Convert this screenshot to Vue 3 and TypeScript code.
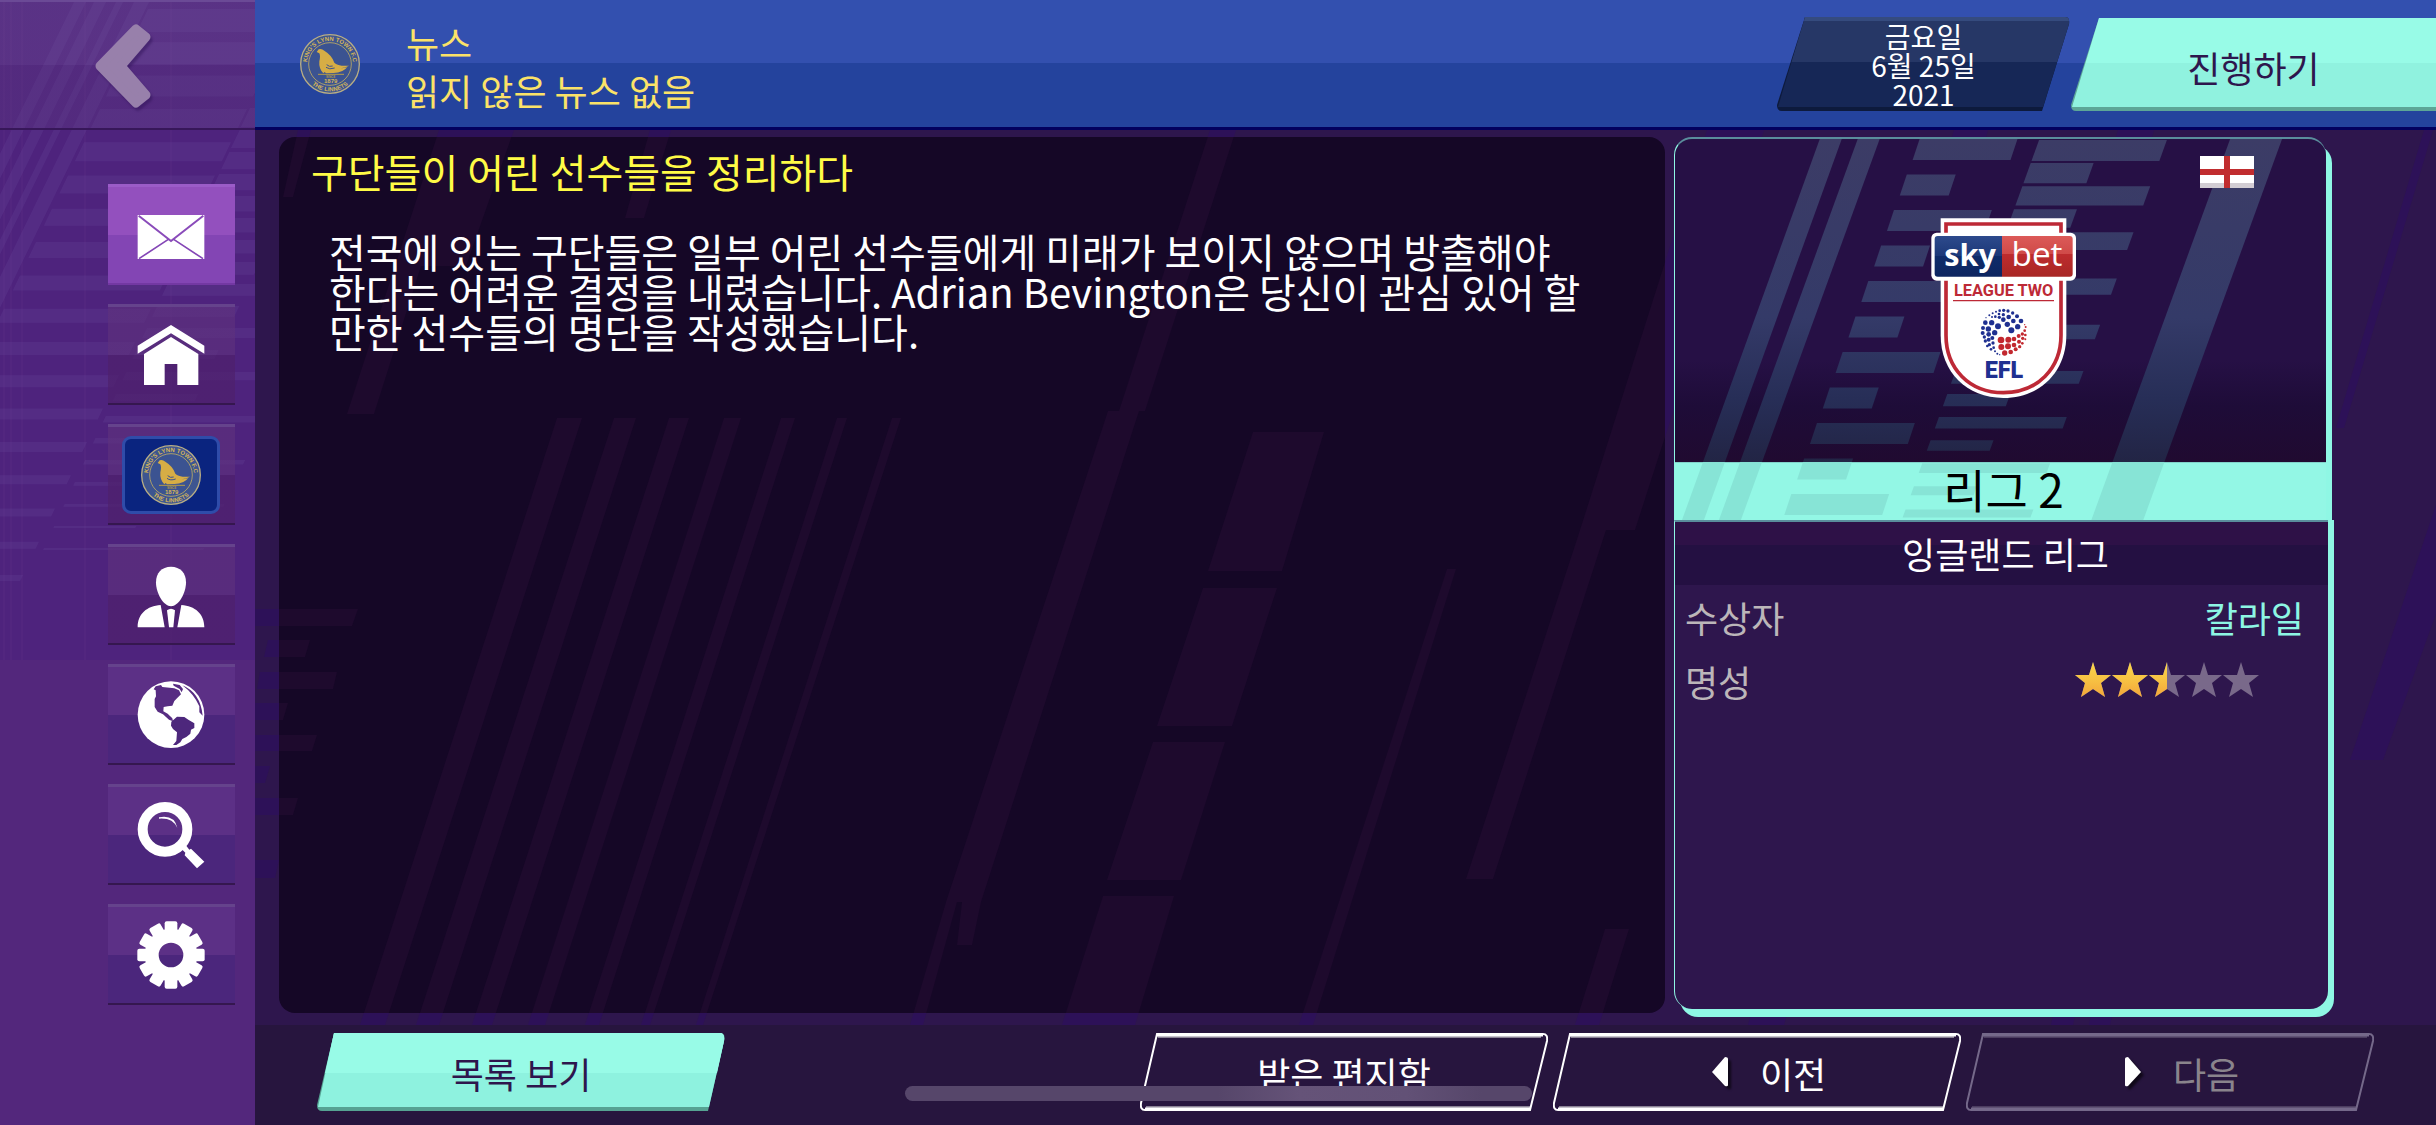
<script setup lang="ts">
import { computed, ref } from 'vue'

interface Tab {
  id: string
  label: string
}

const tabs: Tab[] = [
  { id: 'news', label: '뉴스' },
  { id: 'home', label: '홈' },
  { id: 'club', label: '구단' },
  { id: 'manager', label: '감독' },
  { id: 'world', label: '세계' },
  { id: 'search', label: '검색' },
  { id: 'settings', label: '설정' },
]
const active = ref('news')

const reputation = 2.5
const starFill = computed(() =>
  [0, 1, 2, 3, 4].map((i) => Math.max(0, Math.min(1, reputation - i))),
)
const starPath = 'M18 0 L22 13 L36 13 L26 21 L30 35 L18 27 L6 35 L10 21 L0 13 L14 13 Z'

/* A slanted bar: top-left, top width, top y, bottom-left, bottom width, bottom y */
type Bar = [number, number, number, number, number, number]
const toPoints = ([x1, w1, y1, x2, w2, y2]: Bar) =>
  `${x1},${y1} ${x1 + w1},${y1} ${x2 + w2},${y2} ${x2},${y2}`

const backdrop = ([
  [557, 25, 418, 360, 25, 1025],
  [614, 22, 418, 416, 23, 1025],
  [669, 20, 418, 472, 20, 1025],
  [724, 17, 418, 528, 17, 1025],
  [781, 14, 418, 585, 14, 1025],
  [837, 10, 418, 641, 9, 1025],
  [892, 9, 418, 696, 7, 1025],
  [1210, 26, 130, 1119, 26, 411],
  [1108, 31, 411, 946, 35, 902],
  [946, 11, 902, 910, 13, 1025],
  [962, 19, 902, 957, 15, 945],
  [1253, 71, 432, 1208, 74, 571],
  [1203, 74, 588, 1157, 75, 726],
  [1153, 72, 742, 1107, 74, 880],
  [1103, 71, 896, 1062, 73, 1025],
  [1447, 9, 569, 1299, 14, 1025],
  [1707, 57, 130, 1580, 55, 530],
  [1580, 26, 530, 1466, 27, 879],
  [1605, 24, 929, 1575, 24, 1025],
  [439, 75, 130, 395, 71, 266],
  [395, 26, 266, 347, 27, 414],
  [298, 13, 130, 283, 10, 197],
  [650, 21, 130, 625, 19, 218],
  [255, 103, 609, 255, 97, 626],
  [268, 42, 640, 264, 41, 657],
  [260, 77, 672, 257, 76, 689],
  [255, 33, 703, 255, 28, 720],
  [255, 62, 735, 255, 57, 751],
  [255, 15, 766, 255, 10, 783],
  [255, 43, 798, 255, 38, 815],
  [255, 24, 860, 255, 20, 878],
  [1954, 34, 130, 1952, 34, 137],
  [2118, 36, 130, 2116, 36, 137],
  [2424, 9, 130, 2336, 8, 428],
  [2440, 40, 493, 2350, 33, 760],
  [1752, 36, 1010, 1748, 36, 1025],
  [2054, 22, 1010, 2051, 22, 1025],
  [2092, 21, 1010, 2089, 21, 1025],
] as Bar[]).map(toPoints)

const sideBars: string[] = []
for (const [x, w] of [[75, 12], [95, 12], [117, 7], [135, 15]]) {
  sideBars.push(toPoints([x, w, 0, x - 156, w, 320]))
}
for (let i = 0; i < 18; i++) {
  const y = 9 + i * 33.3
  const h = 23 - i
  const left = Math.max(-30, 148 - i * 16)
  const right = 295 - i * 16
  sideBars.push(toPoints([left, right - left, y, left - h * 0.48, right - left, y + h]))
}
for (let i = 0; i < 21; i++) {
  const y = 108 + i * 22
  const h = Math.max(2, 19 - i * 0.9)
  const x = 250 - i * 10.3
  const w = i % 2 ? 82 : 160
  sideBars.push(toPoints([x, w, y, x - h * 0.48, w, y + h]))
}

/* Competition card pattern, drawn in a 652 x 382 space */
const heroBars: string[] = [
  toPoints([145, 22, 0, 7, 22, 382]),
  toPoints([183, 22, 0, 44, 22, 382]),
  toPoints([556, 52, 0, 417, 52, 382]),
]
for (let i = 0; i < 11; i++) {
  const y = i * 35.6
  const x = 245 - y * 0.361
  const w = i % 2 ? 49 : 98
  heroBars.push(toPoints([x, w, y, x - 7, w, y + 21]))
}
for (let i = 0; i < 17; i++) {
  const y = 1 + i * 23.15
  const h = 21 - i * 0.8
  const x = 365 - y * 0.361
  const w = i % 2 ? 63 : 128
  heroBars.push(toPoints([x, w, y, x - h * 0.361, w, y + h]))
}

const blueDots = [
  [334, 390, 9], [294, 378, 9], [322, 372, 8], [353, 379, 8], [284, 397, 8], [340, 362, 7], [363, 362, 7],
  [275, 367, 8], [256, 367, 7], [265, 386, 8], [249, 383, 6], [248, 398, 6], [266, 402, 7], [277, 413, 6],
  [253, 410, 5], [266, 418, 6], [279, 428, 5], [256, 422, 5], [268, 433, 5], [281, 442, 4], [262, 437, 4],
  [273, 447, 4], [285, 453, 3], [292, 460, 3], [299, 463, 2], [310, 358, 7], [326, 350, 7], [298, 351, 5],
  [351, 348, 6], [310, 343, 5], [338, 338, 5], [324, 332, 5], [311, 330, 5], [297, 341, 4], [286, 349, 4],
  [299, 331, 4], [288, 334, 3], [278, 339, 3], [268, 345, 3], [276, 350, 3], [258, 352, 2],
]
const redDots = [
  [303, 419, 10], [325, 418, 9], [304, 440, 9], [324, 438, 9], [314, 458, 8], [342, 416, 7], [342, 434, 7],
  [332, 455, 7], [356, 407, 6], [357, 424, 6], [347, 447, 6], [359, 439, 5], [367, 401, 5], [368, 414, 5],
  [367, 429, 4], [374, 391, 4], [376, 404, 4], [376, 417, 3], [377, 380, 3], [374, 373, 2],
]
const teeth = Array.from({ length: 12 }, (_, i) => i * 30)
</script>

<template>
  <div class="app">
    <svg class="defs" aria-hidden="true">
      <defs>
        <symbol id="crest" viewBox="0 0 180 180">
          <circle cx="90" cy="90" r="88" fill="#3d5590" stroke="#b9ae84" stroke-width="4" />
          <circle cx="90" cy="90" r="64" fill="#3b5391" stroke="#a99d6c" stroke-width="3" />
          <path id="arc-top" d="M25 113 A69 69 0 1 1 155 113" fill="none" />
          <path id="arc-low" d="M8 90 A82 82 0 0 0 172 90" fill="none" />
          <text class="crest-text" text-anchor="middle">
            <textPath href="#arc-top" startOffset="50%">KING'S LYNN TOWN F.C</textPath>
          </text>
          <text class="crest-text" text-anchor="middle">
            <textPath href="#arc-low" startOffset="50%">THE LINNETS</textPath>
          </text>
          <path
            d="M50 54 L56 46 Q64 42 73 50 Q96 64 103 86 Q112 97 147 95 Q134 101 122 103 Q142 102 145 96 Q128 118 98 117 L78 118 L74 114 L70 118 Q56 104 58 82 Q62 66 58 58 Z"
            fill="#d6ad45"
          />
          <path d="M80 92 q8 8 18 4 M78 100 q10 8 26 2" stroke="#3b5391" stroke-width="3" fill="none" />
          <path d="M54 121 H132" stroke="#b49a4a" stroke-width="3" />
          <text class="crest-since" x="92" y="131" text-anchor="middle">SINCE</text>
          <text class="crest-year" x="92" y="147" text-anchor="middle">1879</text>
        </symbol>
      </defs>
    </svg>

    <nav class="side" aria-label="주 메뉴">
      <svg class="side-bg" viewBox="0 0 255 1125" preserveAspectRatio="none" aria-hidden="true">
        <rect width="255" height="660" fill="#4e237d" />
        <polygon v-for="(p, i) in sideBars" :key="i" :points="p" fill="#6a4a9a" fill-opacity="0.26" />
        <path d="M4 0V660 M11 0V660 M22 0V660 M85 0V660 M171 0V660" stroke="#7a4a9c" stroke-opacity="0.2" />
      </svg>
      <button class="back" type="button" aria-label="뒤로">
        <svg width="56" height="84" viewBox="0 0 56 84">
          <path
            d="M41 5 L51 13 L26 42 L51 71 L41 79 L5 42 Z"
            fill="#9880ab"
            stroke="#9880ab"
            stroke-width="9"
            stroke-linejoin="round"
          />
        </svg>
      </button>
      <ul class="tabs">
        <li v-for="(tab, i) in tabs" :key="tab.id">
          <button
            type="button"
            class="tab"
            :class="{ on: active === tab.id, low: i > 3 }"
            :aria-label="tab.label"
            @click="active = tab.id"
          >
            <span v-if="tab.id === 'club'" class="club">
              <svg width="60" height="60"><use href="#crest" /></svg>
            </span>
            <svg v-else width="68" height="68" viewBox="0 0 204 204" fill="#fff">
              <g v-if="tab.id === 'news'">
                <rect x="2" y="42" width="200" height="132" />
                <path d="M5 44 L102 120 L199 44" fill="none" stroke="#8a4bba" stroke-width="6" />
                <path d="M94 115 L6 173 M110 115 L198 173" stroke="#8446b6" stroke-width="5" />
              </g>
              <g v-else-if="tab.id === 'home'">
                <path d="M102 12 L202 74 V98 L102 37 L2 98 V74 Z" />
                <path d="M102 48 L184 99 V192 H121 V129 H83 V192 H21 V99 Z" />
              </g>
              <g v-else-if="tab.id === 'manager'">
                <path
                  d="M102 17 C130 17 147 36 147 64 C147 98 124 136 102 136 C80 136 57 98 57 64 C57 36 74 17 102 17 Z"
                />
                <path d="M2 199 C2 158 30 135 71 132 L83 199 Z M202 199 C202 158 174 135 133 132 L121 199 Z" />
                <path d="M90 148 Q102 139 114 148 L109 199 H96 Z" />
              </g>
              <g v-else-if="tab.id === 'world'">
                <circle cx="102" cy="101" r="100" />
                <path
                  fill="#572c82"
                  d="M50 25 L56 16 L72 12 L76 18 L98 20 L112 22 L126 28 L132 40 L120 52 L112 60 L106 74 L92 76 L80 78 L79 91 L92 98 L106 112 L108 121 L96 116 L78 100 L62 92 L53 78 L53 54 L57 46 L56 28 Z"
                />
                <path
                  fill="#4d277c"
                  d="M103 122 L120 107 L142 108 L154 116 L172 127 L172 141 L162 146 L160 158 L148 168 L136 174 L130 184 L118 192 L108 192 L118 180 L120 154 L108 144 L102 134 Z"
                />
                <path fill="#572c82" d="M108 8 L128 12 L138 24 L134 34 L128 24 L110 14 Z" />
                <path fill="#572c82" d="M136 13 Q190 35 197 104 L187 94 V76 Q170 38 136 13 Z" />
              </g>
              <g v-else-if="tab.id === 'search'">
                <circle cx="84" cy="85" r="67" fill="none" stroke="#fff" stroke-width="30" />
                <path d="M66 49 Q112 40 121 81 Q108 50 66 53 Z" />
                <path d="M130 140 L146 132 L157 146 L162 143 L202 182 L180 202 L143 163 L145 155 Z" />
              </g>
              <g v-else>
                <rect
                  v-for="a in teeth"
                  :key="a"
                  x="83"
                  y="1"
                  width="38"
                  height="40"
                  rx="6"
                  :transform="`rotate(${a} 102 102)`"
                />
                <circle cx="102" cy="102" r="58" fill="none" stroke="#fff" stroke-width="42" />
              </g>
            </svg>
          </button>
        </li>
      </ul>
    </nav>

    <div class="stage">
      <header class="top">
        <svg class="top-crest" width="60" height="60" role="img" aria-label="King's Lynn Town F.C">
          <use href="#crest" />
        </svg>
        <div class="titles">
          <h1>뉴스</h1>
          <p>읽지 않은 뉴스 없음</p>
        </div>
        <button class="date" type="button">
          <svg class="shape" viewBox="0 0 293 94" preserveAspectRatio="none" aria-hidden="true">
            <defs>
              <linearGradient id="navy" x1="0" y1="0" x2="0" y2="1">
                <stop offset="0.5" stop-color="#263766" />
                <stop offset="0.5" stop-color="#162756" />
              </linearGradient>
            </defs>
            <path d="M28 0 H288 Q293 0 292 7 L265 94 H5 Q0 94 0 88 Z" fill="#0d1a3c" />
            <path d="M28 0 H288 Q293 0 292 7 L266 90 H1 Z" fill="url(#navy)" />
            <path d="M28 0 H288 Q292 0 292 4 H27 Z" fill="#354b7e" />
          </svg>
          금요일<br />6월 25일<br />2021
        </button>
        <button class="go" type="button">
          <svg class="shape" viewBox="0 0 365 94" preserveAspectRatio="none" aria-hidden="true">
            <defs>
              <linearGradient id="mint" x1="0" y1="0" x2="0" y2="1">
                <stop offset="0.51" stop-color="#98fbe7" />
                <stop offset="0.51" stop-color="#90f2df" />
              </linearGradient>
            </defs>
            <path d="M28 1 H365 V94 H5 Q0 94 0 88 Z" fill="#5da697" />
            <path d="M28 1 H365 V90 H1 Z" fill="url(#mint)" />
          </svg>
          진행하기
        </button>
      </header>

      <main class="content">
        <svg class="content-bg" viewBox="255 130 2181 895" preserveAspectRatio="none" aria-hidden="true">
          <polygon v-for="(p, i) in backdrop" :key="i" :points="p" fill="#2d1158" />
        </svg>

        <article class="news">
          <svg class="news-bg" viewBox="279 137 1386 876" preserveAspectRatio="none" aria-hidden="true">
            <polygon v-for="(p, i) in backdrop" :key="i" :points="p" fill="#1e0a2d" />
          </svg>
          <h2>구단들이 어린 선수들을 정리하다</h2>
          <p>
            전국에 있는 구단들은 일부 어린 선수들에게 미래가 보이지 않으며 방출해야
            한다는 어려운 결정을 내렸습니다. Adrian Bevington은 당신이 관심 있어 할
            만한 선수들의 명단을 작성했습니다.
          </p>
        </article>

        <aside class="card">
          <div class="hero">
            <svg class="hero-bg" viewBox="0 0 652 382" preserveAspectRatio="none" aria-hidden="true">
              <defs>
                <linearGradient id="fade" gradientUnits="userSpaceOnUse" x1="0" y1="0" x2="0" y2="326">
                  <stop offset="0" stop-color="#3c3c66" />
                  <stop offset="0.55" stop-color="#343a68" />
                  <stop offset="0.8" stop-color="#272e57" />
                  <stop offset="1" stop-color="#222444" />
                </linearGradient>
                <clipPath id="above"><rect width="652" height="324" /></clipPath>
                <clipPath id="below"><rect y="324" width="652" height="58" /></clipPath>
              </defs>
              <g clip-path="url(#above)" fill="url(#fade)">
                <polygon v-for="(p, i) in heroBars" :key="i" :points="p" />
              </g>
              <rect y="324" width="652" height="58" fill="#93f7e5" />
              <g clip-path="url(#below)" fill="#87e4d6">
                <polygon v-for="(p, i) in heroBars" :key="i" :points="p" />
              </g>
            </svg>
            <svg class="flag" width="54" height="32" viewBox="0 0 54 32" role="img" aria-label="잉글랜드">
              <rect width="54" height="32" fill="#fff" />
              <rect y="27" width="54" height="5" fill="#d2cdd3" />
              <path d="M27 0 V32" stroke="#c12d2f" stroke-width="6" />
              <path d="M0 16 H54" stroke="#c12d2f" stroke-width="6" />
            </svg>
            <svg class="badge" width="147" height="184" viewBox="90 50 441 552" role="img" aria-label="Sky Bet League Two">
              <defs>
                <linearGradient id="blue" x1="0" y1="0" x2="0" y2="1">
                  <stop offset="0" stop-color="#2d4a8c" />
                  <stop offset="0.5" stop-color="#1c3878" />
                  <stop offset="0.5" stop-color="#0f2c6a" />
                  <stop offset="1" stop-color="#0d2560" />
                </linearGradient>
                <linearGradient id="red" x1="0" y1="0" x2="0" y2="1">
                  <stop offset="0" stop-color="#dc5a58" />
                  <stop offset="0.45" stop-color="#cf4a48" />
                  <stop offset="0.45" stop-color="#bd2c2e" />
                  <stop offset="1" stop-color="#a82724" />
                </linearGradient>
              </defs>
              <path d="M122 54 H499 V405 C499 515 420 593 310 593 C200 593 122 515 122 405 Z" fill="#fff" />
              <path
                d="M138 71 H483 V405 C483 505 412 577 310 577 C208 577 138 505 138 405 Z"
                fill="#fff"
                stroke="#bd2936"
                stroke-width="11"
              />
              <rect x="94" y="97" width="434" height="144" rx="16" fill="#fff" />
              <path d="M113 107 H306 V229 H113 Q104 229 104 220 V116 Q104 107 113 107 Z" fill="url(#blue)" />
              <path d="M306 107 H509 Q518 107 518 116 V220 Q518 229 509 229 H306 Z" fill="url(#red)" />
              <text class="sky" x="210" y="196" text-anchor="middle">sky</text>
              <text class="bet" x="411" y="196" text-anchor="middle">bet</text>
              <text class="league" x="311" y="286" text-anchor="middle">LEAGUE TWO</text>
              <path d="M159 301 H462" stroke="#bd2936" stroke-width="4" />
              <circle v-for="([x, y, r], i) in blueDots" :key="i" :cx="x" :cy="y" :r="r" fill="#1f3090" />
              <circle v-for="([x, y, r], i) in redDots" :key="i" :cx="x" :cy="y" :r="r" fill="#c2282f" />
              <text class="efl" x="312" y="533" text-anchor="middle">EFL</text>
            </svg>
            <h2>리그 2</h2>
          </div>
          <div class="facts">
            <h3>잉글랜드 리그</h3>
            <dl>
              <div class="row">
                <dt>수상자</dt>
                <dd><a href="#carlisle">칼라일</a></dd>
              </div>
              <div class="row">
                <dt>명성</dt>
                <dd class="stars" role="img" aria-label="별 5개 중 2.5개">
                  <svg v-for="(f, i) in starFill" :key="i" width="37" height="36" viewBox="0 0 37 36">
                    <defs>
                      <linearGradient :id="`gold${i}`" x1="0" y1="0" x2="0" y2="1">
                        <stop offset="0" stop-color="#fbd64b" />
                        <stop offset="0.5" stop-color="#f7c243" />
                        <stop offset="1" stop-color="#f3a63b" />
                      </linearGradient>
                      <clipPath :id="`cut${i}`"><rect :width="36 * f" height="36" /></clipPath>
                    </defs>
                    <path :d="starPath" fill="#79698a" />
                    <path :d="starPath" :fill="`url(#gold${i})`" :clip-path="`url(#cut${i})`" />
                  </svg>
                </dd>
              </div>
            </dl>
          </div>
        </aside>
      </main>

      <footer class="bottom">
        <button class="act solid" type="button">
          <svg class="shape" viewBox="0 0 408 78" preserveAspectRatio="none" aria-hidden="true">
            <path d="M17 0 H403 Q409 0 407 8 L391 78 H5 Q0 78 0 72 Z" fill="#56a293" />
            <path d="M17 0 H403 Q408 0 407 8 L392 74 H1 Z" fill="#8ef2df" />
            <path d="M17 0 H403 Q408 0 407 8 L400 40 H8 Z" fill="#98fbe7" />
          </svg>
          목록 보기
        </button>
        <button class="act push" type="button">
          <svg class="shape" viewBox="0 0 408 78" preserveAspectRatio="none" aria-hidden="true">
            <path d="M18 4 H401 M6 74 H390" stroke="#8b8396" stroke-width="2" />
            <path class="frame" d="M17 1 H403 Q408 1 407 8 L390 77 H5 Q0 77 1 70 Z" />
            <path class="bars" d="M17 2 H403 M5 76 H390" />
          </svg>
          받은 편지함
        </button>
        <button class="act step" type="button">
          <svg class="shape" viewBox="0 0 408 78" preserveAspectRatio="none" aria-hidden="true">
            <path d="M18 4 H401 M6 74 H390" stroke="#8b8396" stroke-width="2" />
            <path class="frame" d="M17 1 H403 Q408 1 407 8 L390 77 H5 Q0 77 1 70 Z" />
            <path class="bars" d="M17 2 H403 M5 76 H390" />
          </svg>
          <svg class="arrow" width="16" height="30" viewBox="0 0 16 30">
            <path d="M13 0 Q16 0 16 2 V28 Q16 30 13 29 L0 15 Z" fill="#fff" />
          </svg>
          이전
        </button>
        <button class="act step off" type="button" disabled>
          <svg class="shape" viewBox="0 0 408 78" preserveAspectRatio="none" aria-hidden="true">
            <path d="M18 4 H401 M6 74 H390" stroke="#4c3d60" stroke-width="2" />
            <path class="frame" d="M17 1 H403 Q408 1 407 8 L390 77 H5 Q0 77 1 70 Z" />
            <path class="bars" d="M17 2 H403 M5 76 H390" />
          </svg>
          <svg class="arrow" width="16" height="30" viewBox="0 0 16 30">
            <path d="M3 0 Q0 0 0 2 V28 Q0 30 3 29 L16 15 Z" fill="#fff" />
          </svg>
          다음
        </button>
      </footer>
    </div>

    <div class="home-bar" aria-hidden="true"></div>
  </div>
</template>

<style>
html,
body {
  margin: 0;
  background: #2e164d;
}
</style>

<style scoped>
.app {
  position: relative;
  display: flex;
  min-height: 100vh;
  font-family: 'Noto Sans CJK KR', 'Noto Sans', sans-serif;
  font-size: 36px;
  line-height: 48px;
  color: #fff;
  overflow: hidden;
}
.app *,
.app *::before {
  box-sizing: border-box;
}
h1,
h2,
h3,
p,
ul,
dl,
dd {
  margin: 0;
  padding: 0;
  font-weight: 400;
  font-size: inherit;
}
button {
  border: 0;
  padding: 0;
  background: none;
  font: inherit;
  color: inherit;
  cursor: pointer;
}
.defs {
  position: absolute;
  width: 0;
  height: 0;
}
.shape,
.side-bg,
.content-bg,
.news-bg,
.hero-bg {
  position: absolute;
  inset: 0;
  width: 100%;
  height: 100%;
  z-index: -1;
}

/* Side menu */
.side {
  position: relative;
  z-index: 0;
  flex: none;
  width: 255px;
  background: #53277c;
}
.back {
  display: flex;
  align-items: center;
  width: 100%;
  height: 130px;
  padding: 2px 0 0 95px;
  border-top: 2px solid #6b4a96;
  border-bottom: 2px solid #371759;
  background: linear-gradient(rgba(120, 90, 155, 0.28) 50%, rgba(95, 60, 130, 0.3) 50%);
}
.back svg {
  filter: drop-shadow(2px 3px 1px rgba(50, 20, 90, 0.5));
}
.tabs {
  display: flex;
  flex-direction: column;
  gap: 19px;
  margin: 54px 20px 0 108px;
  list-style: none;
}
.tabs li {
  display: flex;
}
.tab {
  display: flex;
  align-items: center;
  justify-content: center;
  width: 100%;
  height: 101px;
  padding-right: 2px;
  border-top: 3px solid #65438c;
  border-bottom: 2px solid #35174f;
  background: linear-gradient(rgba(95, 50, 125, 0.6) 50%, rgba(78, 32, 108, 0.7) 50%);
}
.tab.low {
  background: linear-gradient(#5c3086 50%, #4b267c 50%);
}
.tab.on {
  border-top-color: #9b5cc8;
  border-bottom-color: #7338a3;
  background: linear-gradient(#9350be 50%, #8345b4 50%);
}
.club {
  display: flex;
  align-items: center;
  justify-content: center;
  width: 98px;
  height: 78px;
  border: 3px solid #2f4ca9;
  border-radius: 9px;
  background: #0a247f;
}
.crest-text {
  font: 700 18px 'Liberation Sans', sans-serif;
  fill: #d6b558;
}
.crest-since {
  font: 700 9px 'Liberation Sans', sans-serif;
  fill: #b49a4a;
}
.crest-year {
  font: 700 18px 'Liberation Sans', sans-serif;
  fill: #d6b558;
}

/* Header */
.stage {
  display: flex;
  flex: 1;
  flex-direction: column;
  min-width: 0;
}
.top {
  display: flex;
  align-items: flex-start;
  height: 130px;
  border-bottom: 3px solid #03005e;
  background: linear-gradient(#3350af 50%, #24439d 50%);
}
.top-crest {
  margin: 34px 46px 0 45px;
}
.titles {
  flex: 1;
  padding-top: 18px;
  color: #fbe268;
}
.date,
.go {
  position: relative;
  z-index: 0;
  height: 94px;
  margin-top: 17px;
}
.date {
  width: 293px;
  padding-top: 2px;
  font-size: 28px;
  line-height: 29px;
}
.go {
  width: 365px;
  margin-left: 1px;
  padding-top: 5px;
  color: #2e164d;
}

/* Content */
.content {
  position: relative;
  z-index: 0;
  display: grid;
  flex: 1;
  grid-template-columns: minmax(0, 21fr) minmax(0, 10fr);
  gap: 9px;
  padding: 7px 102px 12px 24px;
  background: #2e164d;
}
.news {
  position: relative;
  z-index: 0;
  padding: 10px 56px 24px 32px;
  border-radius: 16px;
  background: #150726;
  font-size: 40px;
  overflow: hidden;
}
.news h2 {
  color: #fffb46;
}
.news p {
  padding: 36px 0 0 18px;
  line-height: 40px;
  word-break: keep-all;
}
.card {
  display: flex;
  flex-direction: column;
  margin-bottom: 4px;
}
.hero {
  position: relative;
  z-index: 0;
  display: flex;
  flex-direction: column;
  align-items: center;
  height: 383px;
  margin-right: 8px;
  padding-left: 6px;
  border-top: 2px solid #5a8d9c;
  border-left: 1px solid #8ff7e4;
  border-radius: 18px 18px 0 0;
  background: linear-gradient(#261045 0, #261045 58%, #1e0c38 70%, #200a30 85%, #1d0726 100%);
  box-shadow: 6px 8px 0 #8ff7e4;
  overflow: hidden;
}
.flag {
  position: absolute;
  top: 17px;
  right: 72px;
}
.badge {
  margin-top: 78px;
}
.hero h2 {
  margin-top: auto;
  font-size: 46px;
  line-height: 64px;
  color: #000;
}
.sky {
  font: 700 92px 'Open Sans', sans-serif;
  fill: #fff;
}
.bet {
  font: 400 100px 'Open Sans', sans-serif;
  fill: #fff;
}
.league {
  font: 700 49px Roboto, sans-serif;
  fill: #bd2936;
}
.efl {
  font: 900 70px Roboto, sans-serif;
  fill: #1f3090;
}
.facts {
  position: relative;
  flex: 1;
  margin-right: 6px;
  border-top: 2px solid #5a8d9c;
  border-left: 1px solid #8ff7e4;
  border-radius: 0 0 18px 18px;
  background: #2e164d;
  box-shadow: 6px 0 0 #8ff7e4, 6px 8px 0 #8ff7e4;
}
.facts h3 {
  padding-left: 8px;
  line-height: 63px;
  text-align: center;
  background: linear-gradient(#2e1147 36%, #241042 36%);
}
.row {
  display: flex;
  align-items: center;
  justify-content: space-between;
  height: 64px;
  padding: 0 24px 0 10px;
}
.row dt {
  color: #bcb6b9;
}
.row a {
  color: #8df6e3;
  text-decoration: none;
}
.stars {
  display: flex;
  margin: 0 44px 2px 0;
}

/* Footer */
.bottom {
  display: flex;
  align-items: flex-start;
  gap: 5px;
  height: 100px;
  padding: 8px 62px 0;
  background: #27153e;
}
.act {
  position: relative;
  z-index: 0;
  display: flex;
  align-items: center;
  justify-content: center;
  gap: 32px;
  width: 408px;
  height: 78px;
  padding-top: 2px;
}
.act.solid {
  color: #2e164d;
}
.push {
  margin-left: auto;
}
.step {
  padding-left: 24px;
}
.off {
  color: #8a848c;
}
.frame {
  fill: none;
  stroke: #fff;
  stroke-width: 2;
}
.bars {
  stroke: #fff;
  stroke-width: 3;
}
.off .frame,
.off .bars {
  stroke: #75698a;
}
.arrow {
  margin-bottom: 2px;
  filter: drop-shadow(3px 3px 1px rgba(0, 0, 0, 0.6));
}
.home-bar {
  position: absolute;
  bottom: 24px;
  left: 50%;
  z-index: 2;
  width: 627px;
  height: 15px;
  margin-left: -313px;
  border-radius: 8px;
  background: linear-gradient(90deg, #56466a 50%, #655378 63%, #625176 80%, #56466a 92%);
}
</style>
